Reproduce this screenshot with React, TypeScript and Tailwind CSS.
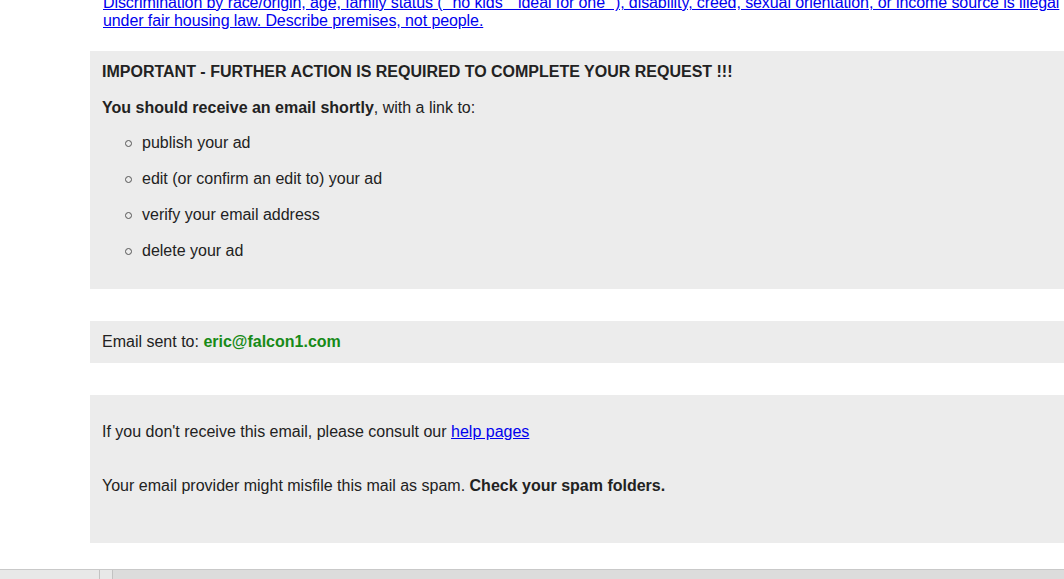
import React from "react";

export default function App() {
  return (
    <div className="h-[579px] w-[1064px] overflow-hidden flex flex-col bg-white text-[#222] text-[16px] leading-[18px]" style={{ fontFamily: '"Liberation Sans", Arial, sans-serif' }}>
      <div className="flex-1 overflow-hidden">
        <div className="ml-[90px] w-[1100px]">
          <div className="pl-[13px] w-[976px] -mt-[6px] tracking-[-0.09px]">
            <a href="#" className="text-[#0000ee] underline">
              Discrimination by race/origin, age, family status ( "no kids" "ideal for one" ), disability, creed, sexual orientation, or income source is illegal under fair housing law. Describe premises, not people.
            </a>
          </div>

          <div className="mt-[21px] bg-[#ececec] pl-[12px] pt-[12px] pb-[29px]">
            <div className="font-bold">IMPORTANT - FURTHER ACTION IS REQUIRED TO COMPLETE YOUR REQUEST !!!</div>
            <div className="mt-[18px]">
              <span className="font-bold">You should receive an email shortly</span>, with a link to:
            </div>
            <ul className="mt-[17px] flex flex-col gap-[18px]">
              {["publish your ad", "edit (or confirm an edit to) your ad", "verify your email address", "delete your ad"].map((t) => (
                <li key={t} className="flex items-center h-[18px]">
                  <span className="ml-[23px] w-[7px] h-[7px] rounded-full border border-[#555] mt-[1px]" />
                  <span className="ml-[10px]">{t}</span>
                </li>
              ))}
            </ul>
          </div>

          <div className="mt-[32px] bg-[#ececec] pl-[12px] h-[42px] pt-[12px]">
            Email sent to: <span className="font-bold text-[#178a17]">eric@falcon1.com</span>
          </div>

          <div className="mt-[32px] bg-[#ececec] pl-[12px] h-[148px] pt-[28px]">
            <div>
              If you don't receive this email, please consult our{" "}
              <a href="#" className="text-[#0000ee] underline">help pages</a>
            </div>
            <div className="mt-[36px]">
              Your email provider might misfile this mail as spam. <span className="font-bold">Check your spam folders.</span>
            </div>
          </div>
        </div>
      </div>
      <div className="h-[10px] shrink-0 border-t border-[#c9c9c9] bg-[#dcdcdc] flex">
        <div className="w-[100px] h-full bg-[#e8e8e8] border-r border-[#c2c2c2]" />
        <div className="w-[13px] h-full bg-[#e8e8e8] border-r border-[#c2c2c2]" />
      </div>
    </div>
  );
}
